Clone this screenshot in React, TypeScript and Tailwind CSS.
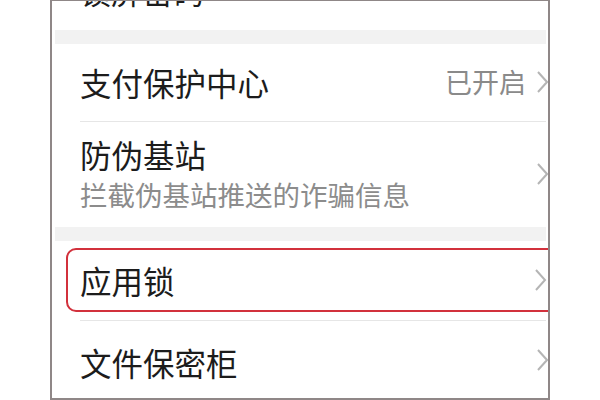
import type { ReactNode } from "react";

const font = { fontFamily: '"Noto Sans CJK SC", "Noto Sans", sans-serif' };

function Chevron() {
  return (
    <svg width="13" height="22" viewBox="0 0 13 22" className="shrink-0">
      <polyline points="2,1 11,11 2,21" fill="none" stroke="#b5b5b5" strokeWidth="2" />
    </svg>
  );
}

function Row({ children, right, height }: { children: ReactNode; right?: ReactNode; height: string }) {
  return (
    <div className={`flex items-center justify-between pl-[25px] ${height}`}>
      <div className="flex flex-col">{children}</div>
      <div className="flex items-center gap-[10px] -mr-[3px]">
        {right}
        <Chevron />
      </div>
    </div>
  );
}

export default function App() {
  return (
    <div className="w-[600px] h-[400px] bg-white flex justify-center" style={font}>
      <div className="w-[500px] h-[400px] border-x-2 border-t border-b-2 border-[#8f8787] overflow-hidden pl-[3px] pr-[2px] flex flex-col">
        <div className="h-[29px] shrink-0 overflow-hidden pl-[25px]">
          <div className="-mt-[26px] text-[31px] leading-[31px] text-[#1c1c1c]">锁屏密码</div>
        </div>
        <div className="h-[14px] shrink-0 bg-[#f2f2f2]" />

        <Row height="h-[78px]" right={<span className="text-[27px] text-[#8a8a8a]">已开启</span>}>
          <span className="text-[31.5px] leading-[36px] text-[#1c1c1c]">支付保护中心</span>
        </Row>
        <div className="ml-[25px] h-px bg-[#e6e6e6] shrink-0" />

        <Row height="h-[108px]">
          <span className="text-[31.5px] leading-[40px] text-[#1c1c1c]">防伪基站</span>
          <span className="text-[27.5px] leading-[40px] text-[#8c8c8c]">拦截伪基站推送的诈骗信息</span>
        </Row>
        <div className="h-[14px] shrink-0 bg-[#f2f2f2]" />

        <div className="h-[79px] shrink-0 pt-[7px] pl-[11px]">
          <div className="h-[64px] -mr-[20px] border-2 border-[#d2313c] rounded-[10px] flex items-center justify-between pl-[12px] pr-[17px]">
            <span className="text-[31.5px] leading-[36px] text-[#1c1c1c]">应用锁</span>
            <Chevron />
          </div>
        </div>
        <div className="ml-[25px] h-px bg-[#e6e6e6] shrink-0" />

        <Row height="h-[78px]">
          <span className="text-[31.5px] leading-[36px] text-[#1c1c1c] mt-[4px]">文件保密柜</span>
        </Row>
      </div>
    </div>
  );
}
